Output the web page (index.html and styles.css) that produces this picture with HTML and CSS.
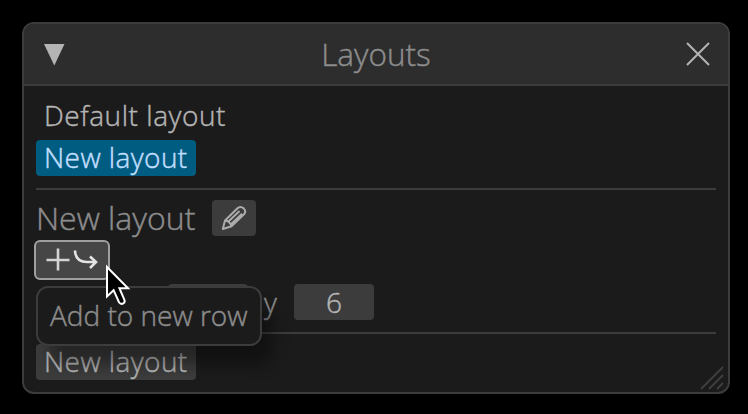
FILE: index.html
```html
<!DOCTYPE html>
<html lang="en">
<head>
<meta charset="utf-8">
<title>Layouts</title>
<link rel="stylesheet" href="styles.css">
</head>
<body>
<main class="window">
  <header class="titlebar">
    <svg class="collapse" width="22" height="24" viewBox="0 0 22 24"><path d="M0 2h20.5L10.3 23.5z"/></svg>
    <h1 class="title">Layouts</h1>
    <svg class="close" width="24" height="24" viewBox="0 0 24 24"><path d="M1 1l22 22M23 1L1 23"/></svg>
  </header>
  <section class="content">
    <div class="option default">Default layout</div>
    <div class="option selected">New layout</div>
    <hr>
    <div class="heading-row">
      <h2 class="heading">New layout</h2>
      <button class="edit" aria-label="Edit">
        <svg width="26" height="26" viewBox="0 0 26 26"><path d="M1.8 24L4 15.5L16.5 3.3Q19.3 .8 22.7 3.4Q25.6 6.3 23 9.3L10.5 21.3zM4 15.5Q9 16 10.5 21.3M8 16L18.5 6M10.5 18.8L21 8.8"/></svg>
      </button>
    </div>
    <button class="add" aria-label="Add to new row">
      <svg width="72" height="36" viewBox="0 0 72 36"><path class="plus" d="M10.5 18h23M22 6.5v22"/><path class="arrow" d="M39 8.5Q39.5 20 51 20H60M54 14.5l6 5.5-6 6"/></svg>
    </button>
    <div class="size-row"><span class="value"></span><span class="by">y</span><span class="value">6</span></div>
    <hr>
    <div class="option filled">New layout</div>
  </section>
  <svg class="grip" width="24" height="24" viewBox="0 0 24 24"><path d="M1 23L23 1M9 23L23 9M17 23l6-6"/></svg>
</main>
<div class="tooltip">Add to new row</div>
<svg class="cursor" width="28" height="42" viewBox="0 0 28 42"><path d="M2 3V32.5L8.6 26.2L14 38.2Q15.6 40.6 18 39.6Q20.4 38.2 19.4 35.8L14.4 24.2H23z"/></svg>
</body>
</html>
```

FILE: styles.css
```css
* { box-sizing: border-box; }
body {
  margin: 0;
  padding: 22px 18px 20px 22px;
  height: 414px;
  overflow: hidden;
  background: #000;
  color: #8c8c8c;
  font: 300 28px/34px "Open Sans", sans-serif;
  -webkit-text-stroke: .45px currentColor;
  white-space: nowrap;
}
svg { display: block; fill: none; }
.window {
  position: relative;
  width: 708px;
  height: 372px;
  border: 2px solid #3c3c3c;
  border-radius: 12px;
  background: #1b1b1b;
  overflow: hidden;
}
.titlebar {
  display: flex;
  justify-content: space-between;
  align-items: center;
  height: 62px;
  padding: 0 18px 0 20px;
  border-bottom: 2px solid #3c3c3c;
  background: #2d2d2d;
}
.collapse { fill: #b4b4b4; }
.close { stroke: #b4b4b4; stroke-width: 2; }
.title, .heading { margin: 0; font-size: 32px; font-weight: 300; }
.title { font-size: 31.5px; line-height: 38px; }
.content { padding: 12px; }
.option { width: 160px; height: 36px; padding: 0 8px; border-radius: 4px; color: #b4b4b4; letter-spacing: .42px; }
.default { letter-spacing: .55px; }
.selected { margin-top: 6px; background: #005c80; color: #c0deff; }
.filled { background: #3c3c3c; }
hr { height: 2px; margin: 12px 0 10px; border: 0; background: #3c3c3c; }
.heading-row { display: flex; gap: 16px; height: 36px; }
.heading { width: 160px; line-height: 36px; }
button { margin: 0; padding: 0; border: 0; background: #3c3c3c; border-radius: 4px; }
.edit { width: 44px; height: 36px; padding: 5px 9px; }
.edit svg { stroke: #acacac; stroke-width: 2; stroke-linejoin: round; }
.add { display: block; width: 76px; height: 40px; margin: 4px 0 4px -2px; border: 2px solid #a0a0a0; border-radius: 6px; background: #464646; }
.plus { stroke: #d4d4d4; stroke-width: 2.6; }
.arrow { stroke: #e4e4e4; stroke-width: 2.6; }
.size-row { display: flex; height: 36px; padding-left: 132px; line-height: 36px; }
.value { width: 80px; border-radius: 4px; background: #3c3c3c; color: #b4b4b4; text-align: center; }
.by { width: 46px; padding-left: 16px; }
.grip { position: absolute; right: 4px; bottom: 2px; stroke: #3e3e3e; stroke-width: 2; }
.tooltip {
  position: absolute;
  left: 36px;
  top: 286px;
  width: 226px;
  height: 60px;
  padding: 10px 12px;
  border: 2px solid #3c3c3c;
  border-radius: 12px;
  background: #1b1b1b;
  box-shadow: 12px 20px 16px -2px rgba(0, 0, 0, .38);
}
.cursor { position: absolute; left: 105px; top: 264px; fill: #000; stroke: #fff; stroke-width: 2; }
```
